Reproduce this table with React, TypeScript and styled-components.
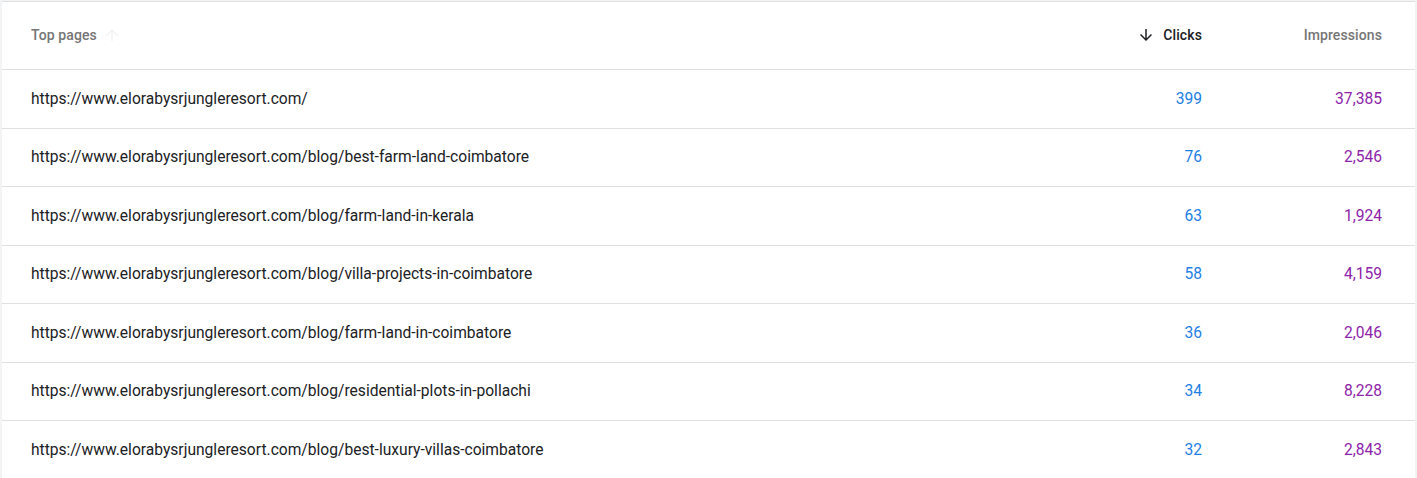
import React from 'react'
import styled, { createGlobalStyle } from 'styled-components';

const GlobalStyle = createGlobalStyle`
html, body {
margin: 0;
padding: 0;
background: #f1f3f4;
font-family: Roboto, "Noto Sans", Arial, sans-serif;
}
`

const rows = [
    { page: 'https://www.elorabysrjungleresort.com/', clicks: '399', impressions: '37,385' },
    { page: 'https://www.elorabysrjungleresort.com/blog/best-farm-land-coimbatore', clicks: '76', impressions: '2,546' },
    { page: 'https://www.elorabysrjungleresort.com/blog/farm-land-in-kerala', clicks: '63', impressions: '1,924' },
    { page: 'https://www.elorabysrjungleresort.com/blog/villa-projects-in-coimbatore', clicks: '58', impressions: '4,159' },
    { page: 'https://www.elorabysrjungleresort.com/blog/farm-land-in-coimbatore', clicks: '36', impressions: '2,046' },
    { page: 'https://www.elorabysrjungleresort.com/blog/residential-plots-in-pollachi', clicks: '34', impressions: '8,228' },
    { page: 'https://www.elorabysrjungleresort.com/blog/best-luxury-villas-coimbatore', clicks: '32', impressions: '2,843' },
];

function Arrow({ up, color }: { up?: boolean, color: string }) {
    return (
        <svg width="18" height="18" viewBox="0 0 24 24" style={{ transform: up ? 'rotate(180deg)' : undefined }}>
            <path fill={color} d="M20 12l-1.41-1.41L13 16.17V4h-2v12.17l-5.58-5.59L4 12l8 8 8-8z" />
        </svg>
    )
}

function App() {
    return (
        <>
        <GlobalStyle />
        <Page>
            <Card>
                <HeaderRow>
                    <HeadCell>
                        Top pages
                        <SortIcon><Arrow up color="#f1f3f4" /></SortIcon>
                    </HeadCell>
                    <HeadCell $right $active>
                        <SortIcon $before><Arrow color="#202124" /></SortIcon>
                        Clicks
                    </HeadCell>
                    <HeadCell $right>Impressions</HeadCell>
                </HeaderRow>
                {rows.map((r) => (
                    <Row key={r.page}>
                        <PageCell>{r.page}</PageCell>
                        <NumCell $color="#1e80e3">{r.clicks}</NumCell>
                        <NumCell $color="#8e24aa">{r.impressions}</NumCell>
                    </Row>
                ))}
            </Card>
        </Page>
        </>
    )
}

export default App;

const Page = styled.div`
padding: 0 2px;
height: 478px;
overflow: hidden;
`

const Card = styled.div`
background: #fff;
border-top: 1px solid #e0e0e0;
margin-top: 1px;
`

const HeaderRow = styled.div`
display: grid;
grid-template-columns: 1fr 180px 180px;
align-items: center;
height: 68px;
padding: 0 33px 1px 29px;
border-bottom: 1px solid #e0e0e0;
box-sizing: border-box;
`

const HeadCell = styled.div<{ $right?: boolean, $active?: boolean }>`
display: flex;
align-items: center;
justify-content: ${(p) => (p.$right ? 'flex-end' : 'flex-start')};
font-size: 14px;
letter-spacing: 0.1px;
font-weight: 500;
color: ${(p) => (p.$active ? '#202124' : '#757575')};
`

const SortIcon = styled.span<{ $before?: boolean }>`
display: inline-flex;
margin: ${(p) => (p.$before ? '0 8px 0 0' : '0 0 0 6px')};
`

const Row = styled.div`
display: grid;
grid-template-columns: 1fr 180px 180px;
align-items: center;
height: 58.5px;
padding: 0 33px 0 29px;
border-bottom: 1px solid #e0e0e0;
box-sizing: border-box;
`

const PageCell = styled.div`
font-size: 15.6px;
color: #202124;
white-space: nowrap;
`

const NumCell = styled.div<{ $color: string }>`
text-align: right;
font-size: 15.6px;
color: ${(p) => p.$color};
`
